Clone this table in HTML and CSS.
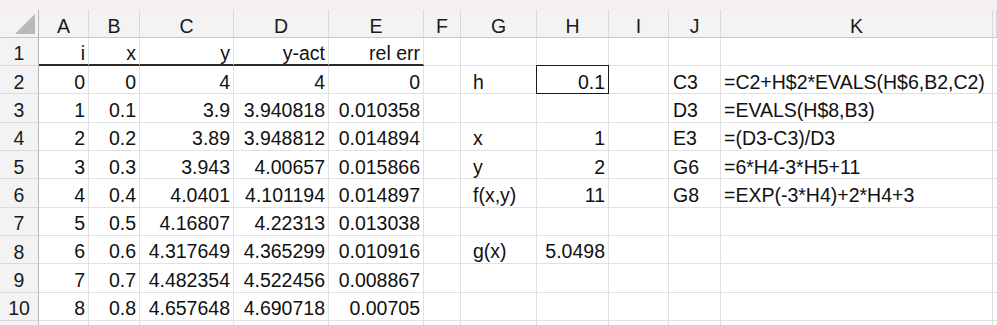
FILE: index.html
```html
<!DOCTYPE html>
<html>
<head>
<meta charset="utf-8">
<link rel="stylesheet" href="styles.css">
</head>
<body>
<div class="sheet">
  <div class="band"></div>

  <div class="row">
    <div class="corner"><svg width="20" height="20" viewBox="0 0 20 20"><polygon points="20,0 20,20 0,20" fill="#b9b9b9"/></svg></div>
    <div class="ch">A</div><div class="ch">B</div><div class="ch">C</div><div class="ch">D</div><div class="ch">E</div><div class="ch">F</div><div class="ch">G</div><div class="ch">H</div><div class="ch">I</div><div class="ch">J</div><div class="ch">K</div><div class="ch"></div>
  </div>

  <div class="row">
    <div class="rh">1</div>
    <div class="c hb">i</div><div class="c hb">x</div><div class="c hb">y</div><div class="c hb">y-act</div><div class="c hb">rel err</div>
    <div class="c"></div><div class="c g"></div><div class="c"></div><div class="c"></div><div class="c j"></div><div class="c k"></div><div class="c"></div>
  </div>

  <div class="row">
    <div class="rh">2</div>
    <div class="c">0</div><div class="c">0</div><div class="c">4</div><div class="c">4</div><div class="c">0</div>
    <div class="c"></div><div class="c g">h</div><div class="c sel">0.1</div><div class="c"></div><div class="c j">C3</div><div class="c k">=C2+H$2*EVALS(H$6,B2,C2)</div><div class="c"></div>
  </div>

  <div class="row">
    <div class="rh">3</div>
    <div class="c">1</div><div class="c">0.1</div><div class="c">3.9</div><div class="c">3.940818</div><div class="c">0.010358</div>
    <div class="c"></div><div class="c g"></div><div class="c"></div><div class="c"></div><div class="c j">D3</div><div class="c k">=EVALS(H$8,B3)</div><div class="c"></div>
  </div>

  <div class="row">
    <div class="rh">4</div>
    <div class="c">2</div><div class="c">0.2</div><div class="c">3.89</div><div class="c">3.948812</div><div class="c">0.014894</div>
    <div class="c"></div><div class="c g">x</div><div class="c">1</div><div class="c"></div><div class="c j">E3</div><div class="c k">=(D3-C3)/D3</div><div class="c"></div>
  </div>

  <div class="row">
    <div class="rh">5</div>
    <div class="c">3</div><div class="c">0.3</div><div class="c">3.943</div><div class="c">4.00657</div><div class="c">0.015866</div>
    <div class="c"></div><div class="c g">y</div><div class="c">2</div><div class="c"></div><div class="c j">G6</div><div class="c k">=6*H4-3*H5+11</div><div class="c"></div>
  </div>

  <div class="row">
    <div class="rh">6</div>
    <div class="c">4</div><div class="c">0.4</div><div class="c">4.0401</div><div class="c">4.101194</div><div class="c">0.014897</div>
    <div class="c"></div><div class="c g">f(x,y)</div><div class="c">11</div><div class="c"></div><div class="c j">G8</div><div class="c k">=EXP(-3*H4)+2*H4+3</div><div class="c"></div>
  </div>

  <div class="row">
    <div class="rh">7</div>
    <div class="c">5</div><div class="c">0.5</div><div class="c">4.16807</div><div class="c">4.22313</div><div class="c">0.013038</div>
    <div class="c"></div><div class="c g"></div><div class="c"></div><div class="c"></div><div class="c j"></div><div class="c k"></div><div class="c"></div>
  </div>

  <div class="row">
    <div class="rh">8</div>
    <div class="c">6</div><div class="c">0.6</div><div class="c">4.317649</div><div class="c">4.365299</div><div class="c">0.010916</div>
    <div class="c"></div><div class="c g">g(x)</div><div class="c">5.0498</div><div class="c"></div><div class="c j"></div><div class="c k"></div><div class="c"></div>
  </div>

  <div class="row">
    <div class="rh">9</div>
    <div class="c">7</div><div class="c">0.7</div><div class="c">4.482354</div><div class="c">4.522456</div><div class="c">0.008867</div>
    <div class="c"></div><div class="c g"></div><div class="c"></div><div class="c"></div><div class="c j"></div><div class="c k"></div><div class="c"></div>
  </div>

  <div class="row">
    <div class="rh">10</div>
    <div class="c">8</div><div class="c">0.8</div><div class="c">4.657648</div><div class="c">4.690718</div><div class="c">0.00705</div>
    <div class="c"></div><div class="c g"></div><div class="c"></div><div class="c"></div><div class="c j"></div><div class="c k"></div><div class="c"></div>
  </div>

  <div class="row">
    <div class="rh"></div>
    <div class="c"></div><div class="c"></div><div class="c"></div><div class="c"></div><div class="c"></div>
    <div class="c"></div><div class="c g"></div><div class="c"></div><div class="c"></div><div class="c j"></div><div class="c k"></div><div class="c"></div>
  </div>
</div>
</body>
</html>
```

FILE: styles.css
```css
html, body {
  margin: 0;
  padding: 0;
  background: #ffffff;
  overflow: hidden;
  width: 997px;
  height: 325px;
}

.sheet {
  display: grid;
  grid-template-columns: 39px 50px 51px 94px 95px 95px 37px 76px 72px 60px 52px 272px 4px;
  grid-template-rows: 10px 27.7px repeat(11, 28.33px);
  height: 325px;
  overflow: hidden;
  font-family: "Liberation Sans", Arial, sans-serif;
  font-size: 19.5px;
  color: #111111;
}

.band {
  grid-column: 1 / -1;
  background: #f4f1f0;
}

.row {
  display: contents;
}

.corner {
  background: #f3f3f3;
  border-right: 1px solid #b8b8b8;
  border-bottom: 1px solid #c8c8c8;
  box-sizing: border-box;
  display: flex;
  justify-content: flex-end;
  align-items: flex-end;
  padding: 0 3px 2.7px 0;
}

.corner svg {
  display: block;
}

.ch {
  background: #f3f3f3;
  border-right: 1px solid #d9d9d9;
  border-bottom: 1px solid #c8c8c8;
  box-sizing: border-box;
  text-align: center;
  line-height: 26px;
  padding-top: 2.8px;
  color: #1a1a1a;
  white-space: nowrap;
  overflow: hidden;
}

.rh {
  background: #f3f3f3;
  border-right: 1px solid #b8b8b8;
  border-bottom: 1px solid #dadada;
  box-sizing: border-box;
  text-align: center;
  line-height: 26px;
  padding-top: 2.6px;
  color: #1a1a1a;
  white-space: nowrap;
  overflow: hidden;
}

.c {
  border-right: 1px solid #e1e1e1;
  border-bottom: 1px solid #e1e1e1;
  box-sizing: border-box;
  text-align: right;
  line-height: 26px;
  padding: 2.5px 3px 0 3px;
  white-space: nowrap;
  overflow: visible;
  position: relative;
}

.c.hb {
  border-bottom: 2px solid #2a2a2a;
}

.c.g {
  text-align: left;
  padding-left: 12px;
}

.c.j {
  text-align: left;
  padding-left: 4px;
}

.c.k {
  text-align: left;
  padding-left: 3px;
}

.c.sel::after {
  content: "";
  position: absolute;
  top: -1px;
  left: -1px;
  right: -1px;
  bottom: -1px;
  border: 1px solid #1a1a1a;
}
```
